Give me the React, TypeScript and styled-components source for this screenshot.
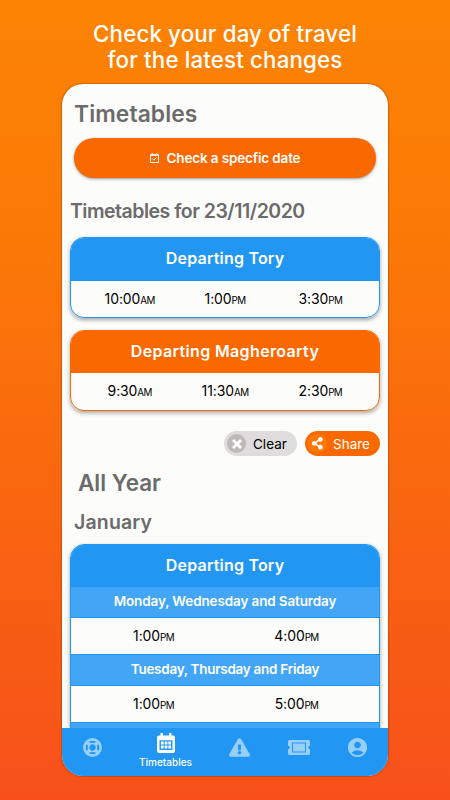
import React from "react";
import styled, { createGlobalStyle } from "styled-components";
import { FaShareAlt, FaExclamationTriangle } from "react-icons/fa";
import { MdAccountCircle } from "react-icons/md";

const BLUE = "#2196f3";
const ORANGE = "#f96900";

const GlobalStyle = createGlobalStyle`
  * { box-sizing: border-box; }
  body { margin: 0; font-family: Inter, sans-serif; color: #000; }
`;

const Page = styled.div`
  width: 450px;
  height: 800px;
  overflow: hidden;
  display: flex;
  flex-direction: column;
  align-items: center;
  background: linear-gradient(180deg, #fc8404 0%, #fb7b06 25%, #fa6d0c 50%, #f85d14 78%, #f7501b 100%);
`;

const Hero = styled.header`
  height: 84px;
  padding-top: 21px;
  flex: none;
  display: flex;
  flex-direction: column;
  align-items: center;
  color: #fff;
  font-size: 22.3px;
  font-weight: 500;
  line-height: 26px;
  letter-spacing: 0.15px;
  white-space: nowrap;
`;

const Phone = styled.main`
  width: 326px;
  height: 692px;
  flex: none;
  border-radius: 21px;
  overflow: hidden;
  display: flex;
  flex-direction: column;
  background: #fcfcfa;
  box-shadow: 0 0 1px 1px rgba(150, 50, 0, 0.4);
`;

const Content = styled.div`
  height: 644px;
  flex: none;
  overflow: hidden;
  display: flex;
  flex-direction: column;
  padding: 8px 8px 0;
`;

const Heading = styled.h2<{ $size: number; $height: number; $indent: number; $spacing: number }>`
  margin: 0;
  flex: none;
  height: ${(p) => p.$height}px;
  line-height: ${(p) => p.$height}px;
  padding-left: ${(p) => p.$indent}px;
  font-size: ${(p) => p.$size}px;
  letter-spacing: ${(p) => p.$spacing}px;
  font-weight: 600;
  color: #6b6b6b;
  white-space: nowrap;
`;

const DateButton = styled.button`
  flex: none;
  height: 40px;
  margin: 2px 4px 18px;
  border: 0;
  border-radius: 20px;
  display: flex;
  align-items: center;
  justify-content: center;
  gap: 8px;
  background: ${ORANGE};
  color: #fff;
  font: 600 13.5px Inter, sans-serif;
  letter-spacing: -0.15px;
  box-shadow: 0 1px 3px rgba(0, 0, 0, 0.4);
`;

const Card = styled.section<{ $color: string; $gap: number }>`
  flex: none;
  border: 1px solid ${(p) => p.$color};
  border-radius: 14px;
  overflow: hidden;
  margin-bottom: ${(p) => p.$gap}px;
  box-shadow: 0 2px 4px rgba(0, 0, 0, 0.35);
`;

const CardTitle = styled.h3<{ $color: string; $spacing: number; $height?: number }>`
  margin: 0;
  height: ${(p) => p.$height ?? 42}px;
  line-height: 40px;
  text-align: center;
  background: ${(p) => p.$color};
  color: #fff;
  font-size: 16px;
  font-weight: 600;
  letter-spacing: ${(p) => p.$spacing}px;
`;

const Band = styled.div<{ $spacing: number }>`
  height: 31px;
  line-height: 29px;
  text-align: center;
  background: #42a5f5;
  border-bottom: 1px solid ${BLUE};
  color: #fff;
  font-size: 13.5px;
  font-weight: 600;
  letter-spacing: ${(p) => p.$spacing}px;
`;

const Times = styled.div<{ $height: number }>`
  height: ${(p) => p.$height}px;
  padding: 0 11px;
  display: flex;
`;

const Time = styled.div`
  flex: 1;
  display: flex;
  align-items: baseline;
  justify-content: center;
  font-size: 14px;
  line-height: 35px;
  letter-spacing: -0.1px;
`;

const Meridiem = styled.small`
  font-size: 9.8px;
  letter-spacing: -0.6px;
`;

const RowLine = styled.div`
  height: 1px;
  background: ${BLUE};
`;

const Actions = styled.div`
  flex: none;
  display: flex;
  justify-content: flex-end;
  gap: 8px;
  height: 25px;
`;

const Chip = styled.button<{ $primary?: boolean }>`
  width: ${(p) => (p.$primary ? 75 : 73)}px;
  height: 25px;
  border: 0;
  padding: 0 0 0 3px;
  border-radius: 13px;
  display: flex;
  align-items: center;
  gap: ${(p) => (p.$primary ? 6 : 7)}px;
  background: ${(p) => (p.$primary ? ORANGE : "#dedcdc")};
  color: ${(p) => (p.$primary ? "#fff" : "#000")};
  font: 400 13.5px Inter, sans-serif;
`;

const ChipIcon = styled.span<{ $primary?: boolean }>`
  width: 19px;
  height: 19px;
  flex: none;
  border-radius: 50%;
  display: grid;
  place-items: center;
  background: ${(p) => (p.$primary ? "#fd7704" : "#bdbbba")};
  color: #fff;
`;

const Nav = styled.nav`
  height: 48px;
  flex: none;
  display: grid;
  grid-template-columns: 60px 87px 61px 57px 61px;
  background: ${BLUE};
`;

const Tab = styled.div<{ $active?: boolean }>`
  display: flex;
  flex-direction: column;
  align-items: center;
  justify-content: ${(p) => (p.$active ? "flex-start" : "center")};
  padding: ${(p) => (p.$active ? "5px 0 0" : "0 0 9px")};
  gap: 3px;
  color: ${(p) => (p.$active ? "#fff" : "#98cff9")};
  font-size: 10px;
  font-weight: 500;
  line-height: 12px;
`;

const Spacer = styled.div<{ $height: number }>`
  flex: none;
  height: ${(p) => p.$height}px;
`;

const CheckCalendar = () => (
  <svg width="9" height="10" viewBox="0 0 9 10" fill="none" stroke="#fff">
    <path d="M.5 1.7h8v7.8h-8zM.5 2.2h8M2.2 0v2M6.8 0v2" />
    <path d="M2.5 5.7l1.4 1.4 2.7-2.8" />
  </svg>
);

const LifeRingIcon = () => (
  <svg width="19" height="19" viewBox="0 0 19 19" fill="none" stroke="currentColor">
    <circle cx="9.5" cy="9.5" r="8.1" strokeWidth="2.6" />
    <circle cx="9.5" cy="9.5" r="4" strokeWidth="1.7" />
    <path d="M3.900 3.900l3 3M15.100 3.900l-3 3M3.900 15.100l3-3M15.100 15.100l-3-3" strokeWidth="3.600" />
  </svg>
);

const CalendarIcon = () => (
  <svg width="18" height="20" viewBox="0 0 18 20">
    <path
      fill="#fff"
      fillRule="evenodd"
      d="M3.500 0h2.400v2.500h6.200V0h2.400v2.500H16a2 2 0 0 1 2 2V18a2 2 0 0 1-2 2H2a2 2 0 0 1-2-2V4.500a2 2 0 0 1 2-2h1.500zM2.500 7.200V17h13V7.200z"
    />
    <path fill="#fff" d="M3.900 8.600h2.800v3H3.900zm3.700 0h2.800v3H7.600zm3.700 0h2.800v3h-2.800zm-7.400 4h2.800v3H3.900zm3.700 0h2.800v3H7.600zm3.700 0h2.800v3h-2.800z" />
  </svg>
);

const TicketIcon = () => (
  <svg width="22" height="15" viewBox="0 0 22 15">
    <path
      fill="currentColor"
      fillRule="evenodd"
      d="M1.500 0h19A1.500 1.500 0 0 1 22 1.500V5.700a1.800 1.800 0 0 0 0 3.600v4.200a1.500 1.500 0 0 1-1.500 1.500h-19A1.500 1.500 0 0 1 0 13.500V9.300A1.800 1.800 0 0 0 0 5.700V1.500A1.500 1.500 0 0 1 1.500 0zM4 2.500v10h14v-10z"
    />
    <path fill="currentColor" d="M5 3.500h12v8H5z" />
  </svg>
);

const CloseIcon = () => (
  <svg width="10" height="10" viewBox="0 0 10 10" stroke="#fff" strokeWidth="2.800">
    <path d="M1 1l8 8M9 1L1 9" />
  </svg>
);

const Schedule = ({ times, height }: { times: string[]; height: number }) => (
  <Times $height={height}>
    {times.map((t) => (
      <Time key={t}>
        {t.slice(0, -2)}
        <Meridiem>{t.slice(-2)}</Meridiem>
      </Time>
    ))}
  </Times>
);

export default function App() {
  return (
    <Page>
      <GlobalStyle />
      <Hero>
        <span>Check your day of travel</span>
        <span>for the latest changes</span>
      </Hero>
      <Phone>
        <Content>
          <Heading as="h1" $size={22.8} $height={44} $indent={4} $spacing={0.1}>
            Timetables
          </Heading>
          <DateButton>
            <CheckCalendar />
            Check a specfic date
          </DateButton>
          <Heading $size={19.5} $height={30} $indent={0} $spacing={-0.5}>
            Timetables for 23/11/2020
          </Heading>
          <Spacer $height={11} />
          <Card $color={BLUE} $gap={12}>
            <CardTitle $color={BLUE} $spacing={0.2} $height={43}>Departing Tory</CardTitle>
            <Schedule times={["10:00AM", "1:00PM", "3:30PM"]} height={36} />
          </Card>
          <Card $color={ORANGE} $gap={20}>
            <CardTitle $color={ORANGE} $spacing={0.35}>Departing Magheroarty</CardTitle>
            <Schedule times={["9:30AM", "11:30AM", "2:30PM"]} height={37} />
          </Card>
          <Actions>
            <Chip>
              <ChipIcon><CloseIcon /></ChipIcon>
              Clear
            </Chip>
            <Chip $primary>
              <ChipIcon $primary><FaShareAlt size={12.5} /></ChipIcon>
              Share
            </Chip>
          </Actions>
          <Spacer $height={11} />
          <Heading $size={22.5} $height={32} $indent={8} $spacing={0}>All Year</Heading>
          <Spacer $height={9} />
          <Heading as="h3" $size={19.5} $height={28} $indent={4} $spacing={0.15}>January</Heading>
          <Spacer $height={8} />
          <Card $color={BLUE} $gap={0}>
            <CardTitle $color={BLUE} $spacing={0.2}>Departing Tory</CardTitle>
            <Band $spacing={-0.13}>Monday, Wednesday and Saturday</Band>
            <Schedule times={["1:00PM", "4:00PM"]} height={36} />
            <RowLine />
            <Band $spacing={-0.28}>Tuesday, Thursday and Friday</Band>
            <Schedule times={["1:00PM", "5:00PM"]} height={36} />
            <RowLine />
            <Band $spacing={0} />
          </Card>
        </Content>
        <Nav>
          <Tab><LifeRingIcon /></Tab>
          <Tab $active>
            <CalendarIcon />
            Timetables
          </Tab>
          <Tab><FaExclamationTriangle size={21} /></Tab>
          <Tab><TicketIcon /></Tab>
          <Tab><MdAccountCircle size={23} /></Tab>
        </Nav>
      </Phone>
    </Page>
  );
}
